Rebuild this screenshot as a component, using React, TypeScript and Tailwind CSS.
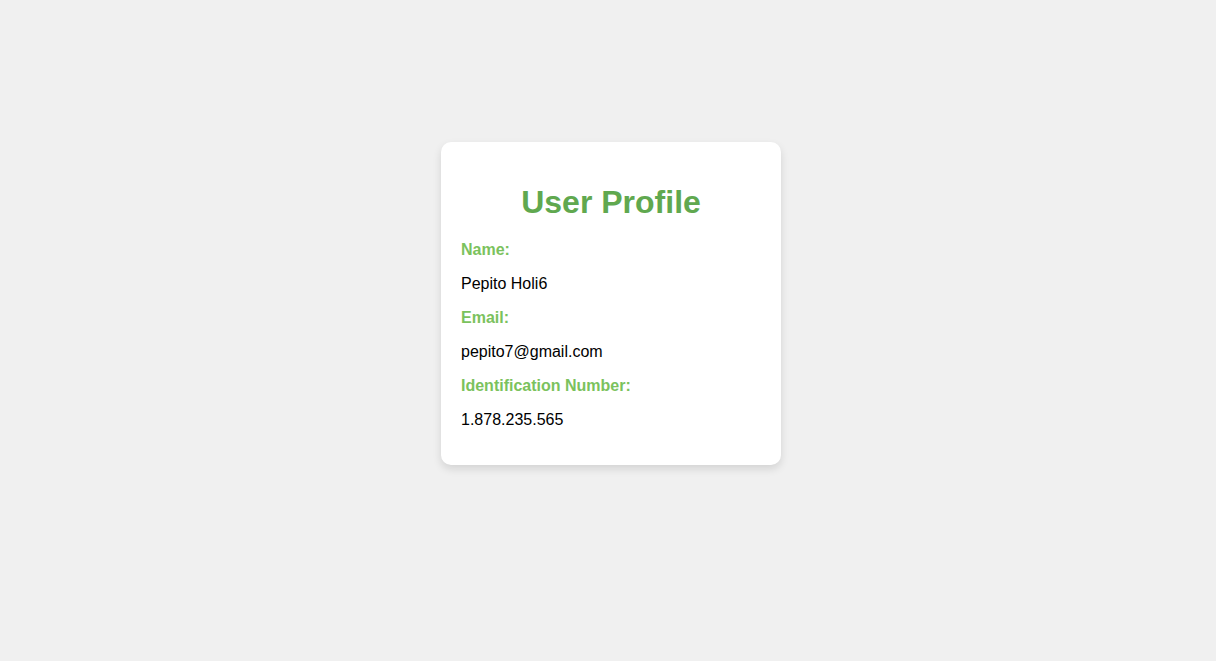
export default function App() {
  const fields = [
    { label: "Name:", value: "Pepito Holi6" },
    { label: "Email:", value: "pepito7@gmail.com" },
    { label: "Identification Number:", value: "1.878.235.565" },
  ];

  return (
    <div
      className="flex min-h-screen justify-center bg-[#f0f0f0] pl-[6px] pt-[142px]"
      style={{ fontFamily: '"Liberation Sans", Arial, sans-serif' }}
    >
      <div className="h-fit w-[340px] rounded-[10px] bg-white px-5 pb-5 pt-5 shadow-[0_4px_8px_rgba(0,0,0,0.12)]">
        <h1 className="mb-5 mt-[22px] text-center text-[32px] font-bold leading-[37px] text-[#60a84f]">
          User Profile
        </h1>
        {fields.map((f) => (
          <div key={f.label}>
            <p className="mb-4 text-base font-bold leading-[18px] text-[#7bc25d]">{f.label}</p>
            <p className="mb-4 text-base leading-[18px] text-black">{f.value}</p>
          </div>
        ))}
      </div>
    </div>
  );
}
